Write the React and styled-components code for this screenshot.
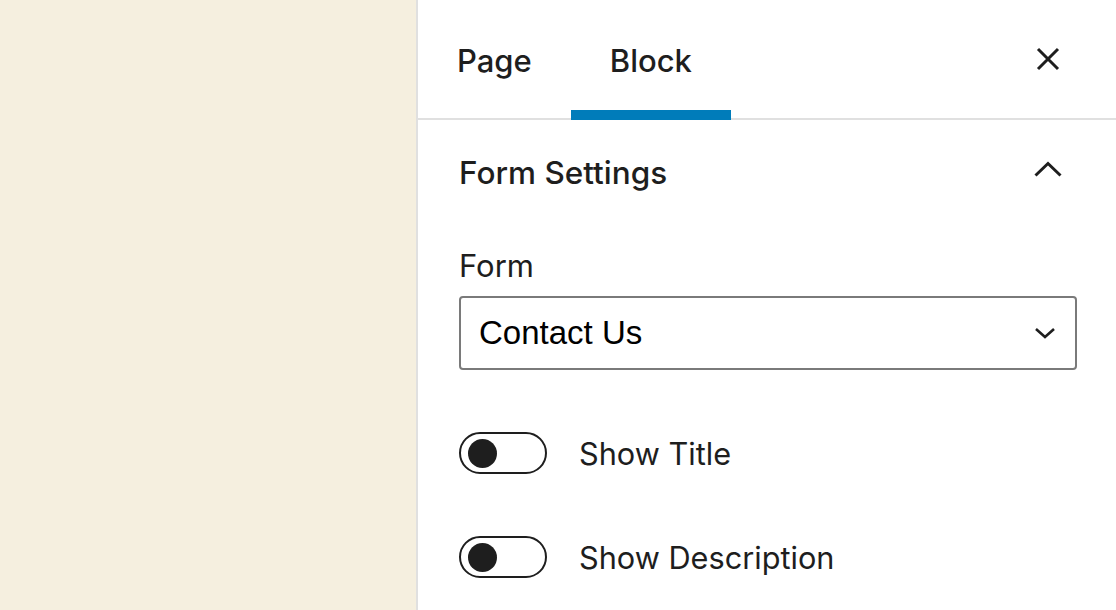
import React from "react";
import styled, { createGlobalStyle } from "styled-components";

const Global = createGlobalStyle`
  html, body { margin: 0; padding: 0; }
  body {
    width: 1116px;
    height: 610px;
    overflow: hidden;
    font-family: Inter, "Noto Sans", sans-serif;
    color: #1e1e1e;
    background: #fff;
  }
`;

const Layout = styled.div`
  display: flex;
  width: 1116px;
  height: 610px;
`;

const Canvas = styled.div`
  width: 416px;
  flex: none;
  background: #f5efdf;
`;

const Sidebar = styled.aside`
  flex: 1;
  display: flex;
  flex-direction: column;
  border-left: 2px solid #e0e0e0;
  background: #fff;
`;

const Header = styled.div`
  display: flex;
  align-items: stretch;
  height: 118px;
  border-bottom: 2px solid #e0e0e0;
  padding-right: 44px;
`;

const Tab = styled.button`
  position: relative;
  border: 0;
  background: none;
  padding: 2px ${(p) => p.$pad}px 0;
  font-family: Inter, "Noto Sans", sans-serif;
  font-size: 31px;
  font-weight: 500;
  color: #1e1e1e;
  cursor: pointer;
  &::after {
    content: "";
    display: ${(p) => (p.$active ? "block" : "none")};
    position: absolute;
    left: 0;
    right: 0;
    bottom: -2px;
    height: 10px;
    background: #007cba;
  }
`;

const Spacer = styled.div`
  flex: 1;
`;

const IconButton = styled.button`
  border: 0;
  background: none;
  padding: 0;
  display: flex;
  align-items: center;
  justify-content: center;
  width: 48px;
  color: #1e1e1e;
`;

const Panel = styled.section`
  padding: 0 39px 0 41px;
  display: flex;
  flex-direction: column;
`;

const PanelTitle = styled.div`
  height: 104px;
  display: flex;
  align-items: center;
  justify-content: space-between;
  font-size: 31.5px;
  font-weight: 500;
`;

const TitleIcon = styled.span`
  display: flex;
  margin-right: 15px;
  margin-bottom: 6px;
`;

const FieldLabel = styled.label`
  margin-top: 24px;
  font-size: 31px;
  line-height: 36px;
  font-weight: 400;
`;

const SelectBox = styled.div`
  margin-top: 12px;
  height: 74px;
  box-sizing: border-box;
  border: 2px solid #7a7a7a;
  border-radius: 4px;
  display: flex;
  align-items: center;
  justify-content: space-between;
  padding: 0 19px 0 18px;
  font-family: "Liberation Sans", Arial, sans-serif;
  font-size: 33px;
  color: #000;
`;

const ToggleRow = styled.div`
  margin-top: ${(p) => p.$gap}px;
  display: flex;
  align-items: center;
  gap: 32px;
  font-size: 30.7px;
  height: 42px;
`;

const Track = styled.span`
  width: 88px;
  height: 42px;
  box-sizing: border-box;
  border: 2px solid #1e1e1e;
  border-radius: 21px;
  display: flex;
  align-items: center;
  padding-left: 7px;
`;

const Knob = styled.span`
  width: 29px;
  height: 29px;
  border-radius: 50%;
  background: #1e1e1e;
`;

const Toggle = ({ label, gap }) => (
  <ToggleRow $gap={gap}>
    <Track>
      <Knob />
    </Track>
    <span>{label}</span>
  </ToggleRow>
);

export default function App() {
  return (
    <>
      <Global />
      <Layout>
        <Canvas />
        <Sidebar>
          <Header>
            <Tab $pad={39}>Page</Tab>
            <Tab $pad={39} $active>
              Block
            </Tab>
            <Spacer />
            <IconButton aria-label="Close">
              <svg width="24" height="24" viewBox="0 0 24 24">
                <path
                  d="M2 2 L22 22 M22 2 L2 22"
                  stroke="#1e1e1e"
                  strokeWidth="3"
                  fill="none"
                />
              </svg>
            </IconButton>
          </Header>
          <Panel>
            <PanelTitle>
              <span>Form Settings</span>
              <TitleIcon>
                <svg width="28" height="16" viewBox="0 0 28 16">
                  <path
                    d="M1.5 14.5 L14 2.5 L26.5 14.5"
                    stroke="#1e1e1e"
                    strokeWidth="3"
                    fill="none"
                  />
                </svg>
              </TitleIcon>
            </PanelTitle>
            <FieldLabel>Form</FieldLabel>
            <SelectBox>
              <span>Contact Us</span>
              <svg width="22" height="12" viewBox="0 0 22 12">
                <path
                  d="M2 2 L11 10 L20 2"
                  stroke="#1e1e1e"
                  strokeWidth="2.6"
                  fill="none"
                />
              </svg>
            </SelectBox>
            <Toggle label="Show Title" gap={62} />
            <Toggle label="Show Description" gap={62} />
          </Panel>
        </Sidebar>
      </Layout>
    </>
  );
}
